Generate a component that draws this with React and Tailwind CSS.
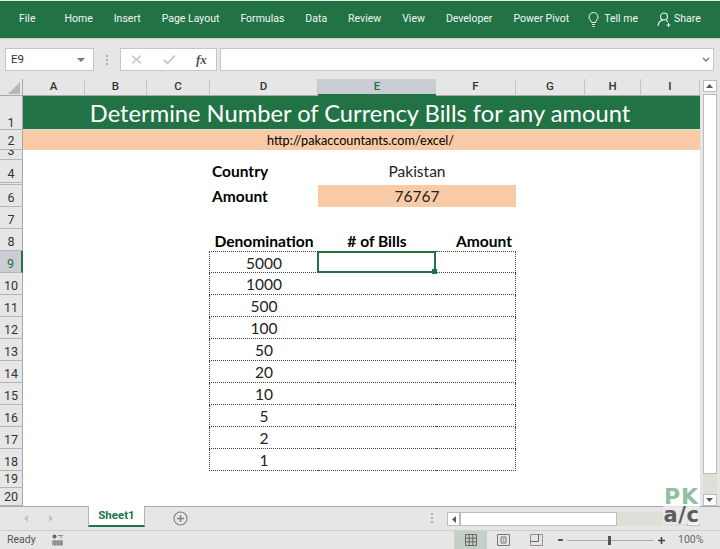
import React from "react";

const UI = "font-['Roboto','Noto_Sans',sans-serif]";
const CELL = "font-['Lato','Noto_Sans',sans-serif]";

const columns = ["A", "B", "C", "D", "E", "F", "G", "H", "I"];
const tabs = ["Home", "Insert", "Page Layout", "Formulas", "Data", "Review", "View", "Developer", "Power Pivot"];
const rows = ["1", "2", "3", "4", "", "6", "7", "8", "9", "10", "11", "12", "13", "14", "15", "16", "17", "18", "19", "20"];
const denominations = [5000, 1000, 500, 100, 50, 20, 10, 5, 2, 1];

function ColumnHeader({ label, col }) {
  const selected = label === "E";
  return (
    <div
      style={{ gridColumn: col, gridRow: 1 }}
      className={`flex items-center justify-center text-[11.5px] font-medium leading-none border-b ${
        selected
          ? "bg-[#cbcdd5] text-[#217346] border-[#217346] border-b-2"
          : "bg-[#e6e6e6] text-[#333] border-[#a8a8a8] border-r border-r-[#c4c4c4]"
      }`}
    >
      {label}
    </div>
  );
}

function RowHeader({ label, row }) {
  const selected = label === "9";
  return (
    <div
      style={{ gridColumn: 1, gridRow: row }}
      className={`overflow-hidden flex items-end justify-center text-[12.5px] border-b border-[#b5b5b5] ${
        label === "1" ? "leading-[12px]" : "leading-[17px]"
      } ${
        selected
          ? "bg-[#cbcdd5] text-[#217346] border-r-2 border-r-[#217346]"
          : "bg-[#e6e6e6] text-[#333] border-r border-r-[#a8a8a8]"
      }`}
    >
      {label}
    </div>
  );
}

function Sheet() {
  return (
    <div
      className={`grid w-[700px] h-full bg-white grid-cols-[23px_62px_62px_63px_108px_118px_80px_69px_56px_59px] grid-rows-[17px_34px_20px_10px_23px_2px_22px_22px_22px_repeat(10,22px)_17px_18px] ${UI}`}
    >
      <div style={{ gridColumn: 1, gridRow: 1 }} className="bg-[#e6e6e6] border-r border-b border-[#a8a8a8] relative">
        <svg className="absolute left-[8px] top-[3px]" width="12" height="12" viewBox="0 0 12 12">
          <path d="M12 0V12H0Z" fill="#b6b6b6" />
        </svg>
      </div>
      {columns.map((c, i) => (
        <ColumnHeader key={c} label={c} col={i + 2} />
      ))}
      {rows.map((r, i) => (
        <RowHeader key={i} label={r} row={i + 2} />
      ))}

      {/* Title */}
      <div
        style={{ gridColumn: "2 / 11", gridRow: 2 }}
        className={`bg-[#217346] text-white flex items-center justify-center text-[23.7px] leading-none pt-[2px] pr-[3px] border-b border-[#d8e2dc] ${CELL}`}
      >
        Determine Number of Currency Bills for any amount
      </div>
      <div
        style={{ gridColumn: "2 / 11", gridRow: 3 }}
        className={`bg-[#f8cba6] text-black flex items-center justify-center text-[12.7px] leading-none pr-[2px] ${CELL}`}
      >
        http://pakaccountants.com/excel/
      </div>

      {/* Inputs */}
      <div style={{ gridColumn: 5, gridRow: 5 }} className={`pl-[2px] flex items-center text-[15.5px] font-bold text-black ${CELL}`}>Country</div>
      <div style={{ gridColumn: "6 / 8", gridRow: 5 }} className={`flex items-center justify-center text-[15.5px] text-[#222] ${CELL}`}>Pakistan</div>
      <div style={{ gridColumn: 5, gridRow: 7 }} className={`pl-[2px] pt-[1px] flex items-center text-[15.5px] font-bold text-black ${CELL}`}>Amount</div>
      <div style={{ gridColumn: "6 / 8", gridRow: 7 }} className={`bg-[#f8cba6] pt-[2px] flex items-center justify-center text-[15.5px] text-[#222] ${CELL}`}>76767</div>

      {/* Table head */}
      <div style={{ gridColumn: 5, gridRow: 9 }} className={`flex items-end justify-center leading-[20px] text-[15.6px] font-bold text-black ${CELL}`}>Denomination</div>
      <div style={{ gridColumn: 6, gridRow: 9 }} className={`flex items-end justify-center leading-[20px] text-[15.6px] font-bold text-black ${CELL}`}>
        # of Bills
      </div>
      <div style={{ gridColumn: 7, gridRow: 9 }} className={`flex items-end justify-end pr-[4px] leading-[20px] text-[15.6px] font-bold text-black ${CELL}`}>Amount</div>

      {/* Table body */}
      {denominations.map((d, i) => (
        <React.Fragment key={d}>
          <div
            style={{ gridColumn: 5, gridRow: i + 10 }}
            className={`-ml-px pt-[3px] flex items-center justify-center text-[15.5px] text-[#222] border-l border-b border-dotted border-[#444] ${i === 0 ? "border-t" : ""} ${CELL}`}
          >
            {d}
          </div>
          <div
            style={{ gridColumn: 6, gridRow: i + 10 }}
            className={`relative border-b border-dotted border-[#444] ${i === 0 ? "border-t" : ""}`}
          >
            {i === 0 && (
              <div className="absolute -top-px -bottom-px -left-px right-0 border-2 border-[#217346]">
                <div className="absolute -right-[3px] -bottom-[3px] w-[5px] h-[5px] bg-[#217346]" />
              </div>
            )}
          </div>
          <div
            style={{ gridColumn: 7, gridRow: i + 10 }}
            className={`border-r border-b border-dotted border-[#444] ${i === 0 ? "border-t" : ""}`}
          />
        </React.Fragment>
      ))}
    </div>
  );
}

function VerticalScroll() {
  return (
    <div className="w-[20px] flex flex-col items-center pl-[2px] pr-[3px] pt-[1px] bg-[#e6e6e6]">
      <div className="w-[14px] h-[12px] bg-white border border-[#bdbdbd] flex items-center justify-center">
        <svg width="7" height="4" viewBox="0 0 7 4"><path d="M0 4L3.5 0L7 4Z" fill="#5a5a5a" /></svg>
      </div>
      <div className="w-[14px] h-[380px] mt-[2px] bg-white border border-[#bdbdbd]" />
      <div className="w-[14px] flex-1 bg-[#dedfd7]" />
      <div className="w-[14px] h-[12px] bg-white border border-[#bdbdbd] flex items-center justify-center">
        <svg width="7" height="4" viewBox="0 0 7 4"><path d="M0 0L3.5 4L7 0Z" fill="#5a5a5a" /></svg>
      </div>
    </div>
  );
}

export default function App() {
  return (
    <div className={`relative w-[720px] h-[549px] overflow-hidden flex flex-col bg-[#e6e6e6] ${UI}`}>
      {/* Ribbon */}
      <div className="h-[38px] shrink-0 bg-[#217346] border-t border-[#e8e8e8] flex items-center pl-[19px] text-[10.5px] text-[#f1f6f3] leading-none whitespace-nowrap">
        <span className="mr-[29px]">File</span>
        <div className="flex gap-[21px]">
          {tabs.map((t) => (
            <span key={t}>{t}</span>
          ))}
        </div>
        <svg className="ml-[19px] mr-[5px]" width="11" height="15" viewBox="0 0 11 15" fill="none" stroke="#f1f6f3" strokeWidth="1">
          <path d="M3.5 10.5C3.3 8.5 1 7.5 1 5a4.5 4.5 0 0 1 9 0c0 2.5-2.3 3.5-2.5 5.5Z" />
          <path d="M4 12.5h3M4.5 14.5h2" />
        </svg>
        <span>Tell me</span>
        <svg className="ml-[19px] mr-[2px]" width="15" height="15" viewBox="0 0 15 15" fill="none" stroke="#f1f6f3" strokeWidth="1.1">
          <circle cx="7" cy="4.5" r="3.5" />
          <path d="M1 14c.3-3.500 2.500-5.500 5-6M9 8.500c.8.3 1.500.8 2 1.500M11.500 11v4M9.500 13h4" />
        </svg>
        <span>Share</span>
      </div>

      {/* Formula bar */}
      <div className="h-[41px] shrink-0 flex items-start pt-[9px] pl-[5px] pr-[6px] border-t border-[#c8c8c8]">
        <div className="w-[89px] h-[23px] bg-white border border-[#c6c6c6] flex items-center justify-between pl-[5px] pr-[8px] text-[11.5px] text-[#333]">
          <span>E9</span>
          <svg width="8" height="4" viewBox="0 0 8 4"><path d="M0 0H8L4 4Z" fill="#777" /></svg>
        </div>
        <div className="w-[26px] h-[23px] flex flex-col items-center justify-center gap-[2px]">
          <div className="w-[2px] h-[2px] bg-[#b0b0b0]" />
          <div className="w-[2px] h-[2px] bg-[#b0b0b0]" />
          <div className="w-[2px] h-[2px] bg-[#b0b0b0]" />
        </div>
        <div className="w-[97px] h-[23px] bg-white border border-[#c6c6c6] flex items-center pl-[10px]">
          <svg width="11" height="11" viewBox="0 0 11 11" stroke="#c4c4c4" strokeWidth="1.6" fill="none">
            <path d="M1 1.500L10 9.500M10 1.500L1 9.500" />
          </svg>
          <svg className="ml-[21px]" width="13" height="11" viewBox="0 0 13 11" stroke="#c4c4c4" strokeWidth="1.8" fill="none">
            <path d="M1 6l3.500 3.500L12 1.500" />
          </svg>
          <span className="ml-[20px] font-['Liberation_Serif',serif] italic font-bold text-[13px] leading-none text-[#555]">fx</span>
        </div>
        <div className="w-[3px]" />
        <div className="flex-1 h-[23px] bg-white border border-[#c6c6c6] flex items-center justify-end pr-[3px]">
          <svg width="8" height="5" viewBox="0 0 8 5" fill="none" stroke="#777" strokeWidth="1.4"><path d="M1 1l3 3 3-3" /></svg>
        </div>
      </div>

      {/* Sheet */}
      <div className="h-[427px] shrink-0 flex">
        <Sheet />
        <VerticalScroll />
      </div>

      {/* Tabs row */}
      <div className="h-[24px] shrink-0 flex items-start border-t border-[#a8a8a8] relative">
        <div className="w-[88px] h-[22px] flex items-center pl-[24px] gap-[21px]">
          <svg width="4" height="7" viewBox="0 0 4 7"><path d="M4 0V7L0 3.500Z" fill="#c0c0c0" /></svg>
          <svg width="4" height="7" viewBox="0 0 4 7"><path d="M0 0V7L4 3.500Z" fill="#c0c0c0" /></svg>
        </div>
        <div className="w-[57px] h-[21px] -mt-px bg-white border-x border-[#b5b5b5] border-b-2 border-b-[#217346] flex items-center justify-center text-[11.5px] font-bold text-[#217346] leading-none">
          Sheet1
        </div>
        <svg className="ml-[28px] mt-[4px]" width="15" height="15" viewBox="0 0 15 15" fill="none" stroke="#808080" strokeWidth="1.1">
          <circle cx="7.500" cy="7.500" r="6.500" />
          <path d="M7.500 4v7M4 7.500h7" strokeWidth="1.400" />
        </svg>
        <div className="ml-[243px] mt-[6px] flex flex-col gap-[2px]">
          <div className="w-[2px] h-[2px] bg-[#b0b0b0]" />
          <div className="w-[2px] h-[2px] bg-[#b0b0b0]" />
          <div className="w-[2px] h-[2px] bg-[#b0b0b0]" />
        </div>
        <div className="ml-[14px] mt-[5px] w-[253px] h-[14px] flex justify-between bg-[#dedfd7]">
          <div className="flex">
            <div className="w-[13px] h-[14px] bg-white border border-[#bdbdbd] flex items-center justify-center">
              <svg width="4" height="7" viewBox="0 0 4 7"><path d="M4 0V7L0 3.500Z" fill="#5a5a5a" /></svg>
            </div>
            <div className="w-[157px] h-[14px] bg-white border border-[#bdbdbd]" />
          </div>
          <div className="w-[13px] h-[14px] bg-white border border-[#bdbdbd]" />
        </div>
      </div>

      {/* Status bar */}
      <div className="h-[19px] shrink-0 flex items-stretch border-t border-[#cfcfcf] text-[#555] text-[10.5px] leading-none">
        <div className="w-[454px] flex items-center pl-[7px]">
          <span className="w-[45px]">Ready</span>
          <svg width="11" height="12" viewBox="0 0 11 12">
            <circle cx="2.500" cy="2.500" r="2" fill="#666" />
            <path d="M0 6h11v5.500H0z" fill="#bbb" />
            <path d="M0 8h11M0 10h11M3 6v6M6 6v6M9 6v6M6 1.500h5M9 1.500v3" stroke="#777" strokeWidth="0.8" fill="none" />
          </svg>
        </div>
        <div className="w-[33px] bg-[#c6cfc6] flex items-center justify-center">
          <svg width="12" height="12" viewBox="0 0 12 12" fill="none" stroke="#666" strokeWidth="1">
            <path d="M.5.500h11v11H.5zM4.200.500v11M7.800.500v11M.5 4.200h11M.5 7.800h11" />
          </svg>
        </div>
        <div className="w-[33px] flex items-center justify-center">
          <svg width="13" height="12" viewBox="0 0 13 12" fill="none" stroke="#777" strokeWidth="1">
            <path d="M.5.500h12v11H.5zM4 3h5v6H4zM5.500 5h2M5.500 7h2" />
          </svg>
        </div>
        <div className="w-[33px] flex items-center justify-center">
          <svg width="13" height="12" viewBox="0 0 13 12" fill="none" strokeWidth="1">
            <path d="M.5.500h12v11H.5z" stroke="#9a8f8f" />
            <path d="M.5 7.500h8V.500" stroke="#666" />
          </svg>
        </div>
        <div className="ml-[5px] flex items-center">
          <div className="w-[5px] h-[2px] bg-[#555]" />
          <div className="ml-[4px] w-[87px] h-px bg-[#aaa] relative">
            <div className="absolute left-[41px] -top-[4px] w-[3px] h-[9px] bg-[#555]" />
          </div>
          <svg className="ml-[4px]" width="7" height="7" viewBox="0 0 7 7"><path d="M3.500 0v7M0 3.500h7" stroke="#444" strokeWidth="1.600" /></svg>
          <span className="ml-[13px] text-[#666] text-[10.5px]">100%</span>
        </div>
      </div>

      {/* Watermark logo */}
      <div className="absolute left-[663px] top-[488px] w-[37px] flex flex-col items-center font-['DejaVu_Sans',sans-serif] font-bold leading-none">
        <span className="text-[#8fc1a0] text-[22px] h-[18px] leading-[18px] tracking-[1px]">PK</span>
        <span className="w-full h-[18px] bg-[#eaeaea]/80 text-[#5f5a60] text-[21px] leading-[18px] text-center tracking-[0.5px]">a/c</span>
      </div>
    </div>
  );
}
